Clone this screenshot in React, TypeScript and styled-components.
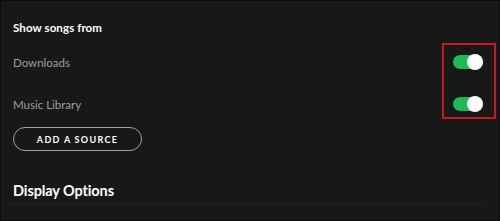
import React, { useState } from 'react';
import styled, { createGlobalStyle } from 'styled-components';

const GlobalStyle = createGlobalStyle`
  html, body {
    margin: 0;
    padding: 0;
    background: #181818;
  }
  * {
    box-sizing: border-box;
  }
`;

interface Source {
  id: number;
  label: string;
  enabled: boolean;
}

const initialSources: Source[] = [
  { id: 1, label: 'Downloads', enabled: true },
  { id: 2, label: 'Music Library', enabled: true },
];

const Frame = styled.div`
  position: relative;
  width: 500px;
  height: 221px;
  overflow: hidden;
  background: #181818;
  border: 1px solid #0c0c0c;
  padding: 19px 16px 0 12px;
  font-family: Lato, 'Noto Sans', 'Liberation Sans', sans-serif;
  display: flex;
  flex-direction: column;
`;

const SectionTitle = styled.h3`
  margin: 0;
  color: #ffffff;
  font-size: 11.5px;
  line-height: 16px;
  font-weight: 700;
  letter-spacing: 0.1px;
`;

const SourceList = styled.ul`
  list-style: none;
  margin: 5px 0 0;
  padding: 0;
`;

const SourceRow = styled.li`
  height: 42px;
  display: flex;
  align-items: center;
  justify-content: space-between;
`;

const SourceLabel = styled.span`
  color: #9e9e9e;
  font-size: 11.5px;
  font-weight: 400;
`;

const ToggleTrack = styled.button<{ $on: boolean }>`
  position: relative;
  width: 30px;
  height: 14px;
  padding: 0;
  border: none;
  border-radius: 7px;
  background: ${(p) => (p.$on ? '#1db954' : '#535353')};
  cursor: pointer;
`;

const ToggleKnob = styled.span<{ $on: boolean }>`
  position: absolute;
  top: -1px;
  ${(p) => (p.$on ? 'right: 0;' : 'left: 0;')}
  width: 16px;
  height: 16px;
  border-radius: 50%;
  background: #ffffff;
`;

const OutlineButton = styled.button`
  align-self: flex-start;
  margin-top: 2px;
  width: 129px;
  height: 24px;
  border: 1px solid #a2a2a2;
  border-radius: 12px;
  background: transparent;
  color: #ffffff;
  font-family: Lato, 'Noto Sans', 'Liberation Sans', sans-serif;
  font-size: 9px;
  font-weight: 700;
  letter-spacing: 1.3px;
  padding: 0;
`;

const LargeTitle = styled.h2`
  margin: 31px 0 0;
  color: #ffffff;
  font-size: 14.5px;
  line-height: 18px;
  font-weight: 700;
  letter-spacing: -0.1px;
`;

const Divider = styled.div`
  margin: 3px 0 0 -12px;
  width: 482px;
  height: 1px;
  background: #1f1f1f;
`;

// annotation box drawn on top of the toggles
const Highlight = styled.div`
  position: absolute;
  left: 441px;
  top: 42px;
  width: 54px;
  height: 76px;
  border: 2px solid #c8161d;
  pointer-events: none;
`;

const App = () => {
  const [sources, setSources] = useState<Source[]>(initialSources);

  const toggle = (id: number) =>
    setSources((prev) => prev.map((s) => (s.id === id ? { ...s, enabled: !s.enabled } : s)));

  return (
    <>
      <GlobalStyle />
      <Frame>
        <SectionTitle>Show songs from</SectionTitle>
        <SourceList>
          {sources.map((s) => (
            <SourceRow key={s.id}>
              <SourceLabel>{s.label}</SourceLabel>
              <ToggleTrack $on={s.enabled} onClick={() => toggle(s.id)} aria-label={s.label}>
                <ToggleKnob $on={s.enabled} />
              </ToggleTrack>
            </SourceRow>
          ))}
        </SourceList>
        <OutlineButton>ADD A SOURCE</OutlineButton>
        <LargeTitle>Display Options</LargeTitle>
        <Divider />
        <Highlight />
      </Frame>
    </>
  );
};

export default App;
